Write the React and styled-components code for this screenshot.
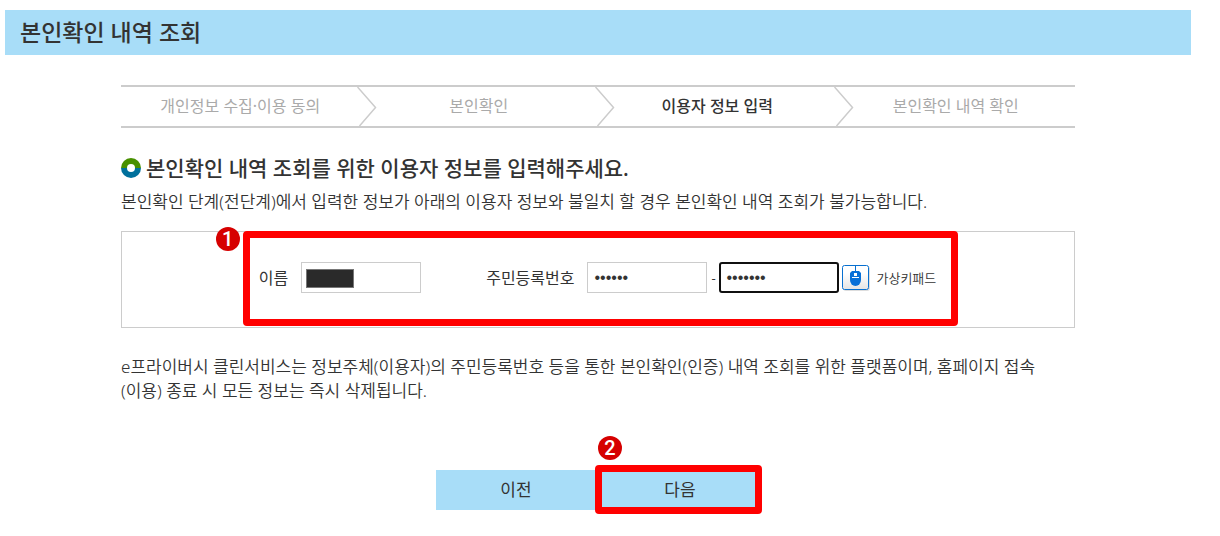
import React, { useState } from "react";
import styled, { createGlobalStyle } from "styled-components";

const GlobalStyle = createGlobalStyle`
  * {
    box-sizing: border-box;
  }

  body {
    margin: 0;
    background-color: #fff;
    color: #333;
    font-family: "Noto Sans", "Noto Sans CJK KR", sans-serif;
    font-size: 16px;
  }
`;

const Page = styled.div`
  padding: 10px 29px 20px 5px;
`;

const TitleBar = styled.h1`
  margin: 0;
  padding: 0 15px;
  background-color: #a8ddf8;
  font-size: 23px;
  font-weight: 500;
  line-height: 45px;
`;

const Content = styled.main`
  max-width: 954px;
  margin: 30px auto 0;
`;

const Steps = styled.ol`
  display: grid;
  grid-template-columns: repeat(4, 1fr);
  margin: 0;
  padding: 0;
  list-style: none;
  border-top: 2px solid #ccc;
  border-bottom: 2px solid #ccc;
`;

const Step = styled.li`
  position: relative;
  height: 39px;
  line-height: 38px;
  text-align: center;
  color: ${(props) => (props.$active ? "#333" : "#aaa")};
  font-weight: ${(props) => (props.$active ? 500 : 400)};
`;

const StepArrow = styled.svg`
  position: absolute;
  top: 0;
  right: -17px;
  width: 20px;
  height: 39px;
`;

const Heading = styled.h2`
  display: flex;
  align-items: center;
  gap: 5px;
  margin: 24px 0 0;
  font-size: 21px;
  font-weight: 500;
  line-height: 32px;
`;

const Text = styled.p`
  margin: 0;
  font-size: 17px;
  font-weight: 350;
  line-height: 24px;
`;

const Intro = styled(Text)`
  margin-top: 6px;
`;

const Notice = styled(Text)`
  margin-top: 27px;
`;

const FormBox = styled.div`
  display: flex;
  justify-content: center;
  margin-top: 17px;
  padding: 30px 0 34px;
  border: 1px solid #ccc;
`;

const Fields = styled.div`
  position: relative;
  display: flex;
  align-items: center;
`;

const Label = styled.label`
  margin-right: 13px;
  line-height: 24px;
`;

const NameField = styled.div`
  position: relative;
  margin-right: 65px;
`;

const Input = styled.input`
  display: block;
  width: 120px;
  height: 31px;
  padding: 0 6px;
  border: 1px solid #ccc;
  border-radius: 0;
  background-color: #fff;
  color: #333;
  font-family: "Liberation Sans", sans-serif;
  font-size: 16px;
  outline: none;
`;

const ActiveInput = styled(Input)`
  padding: 0 5px;
  border: 2px solid #101010;
  border-radius: 3px;
`;

const NameMask = styled.span`
  position: absolute;
  top: 7px;
  left: 5px;
  width: 48px;
  height: 19px;
  border: 1px solid #777;
  background-color: #2a2a2a;
`;

const Dash = styled.span`
  width: 12px;
  text-align: center;
  font-size: 13px;
`;

const KeypadButton = styled.button`
  display: flex;
  align-items: center;
  gap: 6px;
  margin-left: 3px;
  padding: 0 1px 0 0;
  border: none;
  background: none;
  color: #333;
  font-family: inherit;
  font-size: 13px;
  font-weight: 350;
  line-height: 24px;
  cursor: pointer;
`;

const Highlight = styled.span`
  position: absolute;
  border: 7px solid #f00;
  border-radius: 4px;
  pointer-events: none;
`;

const FormHighlight = styled(Highlight)`
  inset: -31px -21px -33px -16px;
`;

const ButtonHighlight = styled(Highlight)`
  inset: -5px -2px -4px -5px;
`;

const Badge = styled.span`
  position: absolute;
  width: 24px;
  height: 24px;
  border-radius: 50%;
  background-color: #d60000;
  color: #fff;
  font-family: Roboto, sans-serif;
  font-size: 20px;
  font-weight: 500;
  line-height: 24px;
  text-align: center;
`;

const FormBadge = styled(Badge)`
  top: -35px;
  left: -43px;
`;

const ButtonBadge = styled(Badge)`
  top: -34px;
  left: -2px;
`;

const Actions = styled.div`
  display: flex;
  justify-content: center;
  gap: 4px;
  margin-top: 67px;
`;

const ActionItem = styled.div`
  position: relative;
`;

const ActionButton = styled.button`
  display: block;
  width: 160px;
  height: 40px;
  padding: 0;
  border: none;
  background-color: #a8ddf8;
  color: #333;
  font-family: inherit;
  font-size: 17px;
  line-height: 40px;
  cursor: pointer;
`;

const RingIcon = () => (
  <svg width="20" height="20" viewBox="0 0 20 20" aria-hidden="true">
    <path d="M0 10a10 10 0 0 1 20 0z" fill="#489000" />
    <path d="M0 10a10 10 0 0 0 20 0z" fill="#00709c" />
    <circle cx="10" cy="10" r="4" fill="#fff" />
  </svg>
);

const MouseIcon = () => (
  <svg width="28" height="26" viewBox="0 0 28 26" aria-hidden="true">
    <defs>
      <linearGradient id="key" x1="0" y1="0" x2="0" y2="1">
        <stop offset="0.3" stopColor="#fff" />
        <stop offset="1" stopColor="#e4e4e4" />
      </linearGradient>
    </defs>
    <rect x="1" y="1" width="27" height="25" rx="3" fill="#ddd" />
    <rect x="0.5" y="0.5" width="26" height="24" rx="2" fill="url(#key)" stroke="#0870d0" />
    <path d="M13.5 1v6" stroke="#0870d0" />
    <path d="M10 6h7l2 2v7a5.5 6 0 0 1-11 0V8z" fill="#0870d8" />
    <rect x="12" y="8" width="3" height="3" fill="#fff" />
    <path d="M10 12.5h7" stroke="#fff" />
  </svg>
);

const steps = ["개인정보 수집·이용 동의", "본인확인", "이용자 정보 입력", "본인확인 내역 확인"];
const currentStep = 2;

const App = () => {
  const [name, setName] = useState("");
  const [front, setFront] = useState("000000");
  const [back, setBack] = useState("0000000");

  return (
    <Page>
      <GlobalStyle />
      <TitleBar>본인확인 내역 조회</TitleBar>

      <Content>
        <Steps>
          {steps.map((step, index) => (
            <Step key={step} $active={index === currentStep}>
              {step}
              {index < steps.length - 1 && (
                <StepArrow viewBox="0 0 20 39" aria-hidden="true">
                  <path d="M0.5 0L18.5 20.5L2.5 39" fill="none" stroke="#ccc" strokeWidth="1.5" />
                </StepArrow>
              )}
            </Step>
          ))}
        </Steps>

        <Heading>
          <RingIcon />
          본인확인 내역 조회를 위한 이용자 정보를 입력해주세요.
        </Heading>
        <Intro>
          본인확인 단계(전단계)에서 입력한 정보가 아래의 이용자 정보와 불일치 할 경우 본인확인 내역 조회가 불가능합니다.
        </Intro>

        <FormBox>
          <Fields>
            <Label htmlFor="name">이름</Label>
            <NameField>
              <Input id="name" value={name} onChange={(e) => setName(e.target.value)} />
              <NameMask />
            </NameField>

            <Label htmlFor="front">주민등록번호</Label>
            <Input
              id="front"
              type="password"
              maxLength={6}
              value={front}
              onChange={(e) => setFront(e.target.value)}
            />
            <Dash>-</Dash>
            <ActiveInput
              type="password"
              aria-label="주민등록번호 뒷자리"
              maxLength={7}
              value={back}
              onChange={(e) => setBack(e.target.value)}
            />
            <KeypadButton type="button">
              <MouseIcon />
              가상키패드
            </KeypadButton>

            <FormHighlight />
            <FormBadge>1</FormBadge>
          </Fields>
        </FormBox>

        <Notice>
          e프라이버시 클린서비스는 정보주체(이용자)의 주민등록번호 등을 통한 본인확인(인증) 내역 조회를 위한 플랫폼이며, 홈페이지 접속
          <br />
          (이용) 종료 시 모든 정보는 즉시 삭제됩니다.
        </Notice>

        <Actions>
          <ActionButton type="button">이전</ActionButton>
          <ActionItem>
            <ActionButton type="button">다음</ActionButton>
            <ButtonHighlight />
            <ButtonBadge>2</ButtonBadge>
          </ActionItem>
        </Actions>
      </Content>
    </Page>
  );
};

export default App;
